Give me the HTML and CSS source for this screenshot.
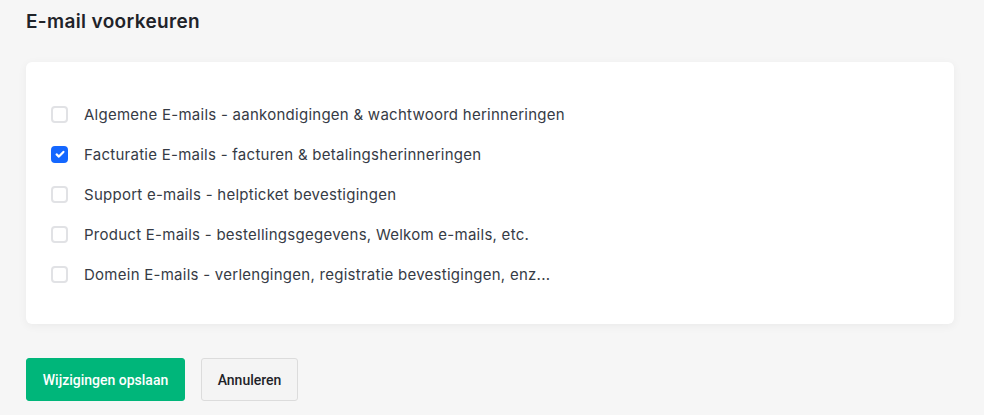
FILE: index.html
```html
<!DOCTYPE html>
<html lang="nl">
<head>
<meta charset="utf-8">
<link rel="stylesheet" href="styles.css">
</head>
<body>
<div class="page">
  <h2 class="title">E-mail voorkeuren</h2>
  <div class="card">
    <label class="row"><span class="box"></span><span>Algemene E-mails - aankondigingen &amp; wachtwoord herinneringen</span></label>
    <label class="row"><span class="box checked"><svg viewBox="0 0 16 16" width="16" height="16"><path d="M4.6 8.4l2.3 2.2 4.5-4.7" fill="none" stroke="#fff" stroke-width="2.2" stroke-linecap="round" stroke-linejoin="round"/></svg></span><span>Facturatie E-mails - facturen &amp; betalingsherinneringen</span></label>
    <label class="row"><span class="box"></span><span>Support e-mails - helpticket bevestigingen</span></label>
    <label class="row"><span class="box"></span><span>Product E-mails - bestellingsgegevens, Welkom e-mails, etc.</span></label>
    <label class="row"><span class="box"></span><span>Domein E-mails - verlengingen, registratie bevestigingen, enz...</span></label>
  </div>
  <div class="actions">
    <button class="btn btn-primary">Wijzigingen opslaan</button>
    <button class="btn btn-default">Annuleren</button>
  </div>
</div>
</body>
</html>
```
FILE: styles.css
```css
html, body {
  margin: 0;
  padding: 0;
  background: #f6f6f6;
}
body {
  font-family: Inter, "Noto Sans", sans-serif;
  color: #2f3640;
}
.page {
  padding: 11px 30px 0 26px;
}
.title {
  margin: 0;
  font-size: 19px;
  font-weight: 600;
  letter-spacing: 0.35px;
  color: #1f2329;
  line-height: 22px;
}
.card {
  margin-top: 29px;
  background: #fff;
  border-radius: 6px;
  box-shadow: 0 2px 10px rgba(0,0,0,0.05);
  padding: 32px 25px 30px;
  display: flex;
  flex-direction: column;
}
.row {
  display: flex;
  align-items: center;
  gap: 16px;
  height: 40px;
  font-size: 15px;
  letter-spacing: 0.26px;
  color: #363b45;
}
.box {
  width: 17px;
  height: 17px;
  border: 2px solid #e1e2e5;
  border-radius: 4px;
  box-sizing: border-box;
  background: #fff;
  display: flex;
  align-items: center;
  justify-content: center;
  flex: none;
}
.box.checked {
  background: #1467ff;
  border-color: #1467ff;
}
.box svg { display: block; flex: none; }
.actions {
  margin-top: 34px;
  display: flex;
  gap: 16px;
}
.btn {
  font-family: Roboto, "Liberation Sans", sans-serif;
  font-size: 14px;
  font-weight: 500;
  height: 43px;
  border-radius: 3px;
  padding: 0;
  white-space: nowrap;
  cursor: pointer;
}
.btn-primary {
  background: #00b67a;
  border: 1px solid #00b67a;
  color: #fff;
  width: 159px;
}
.btn-default {
  background: #f4f4f4;
  border: 1px solid #dcdcdc;
  color: #1f2329;
  width: 97px;
}
```
